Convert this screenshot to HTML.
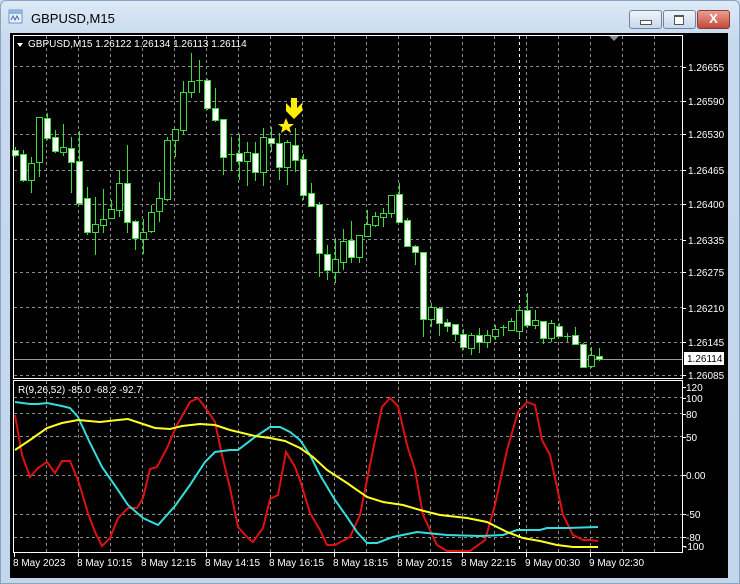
<!DOCTYPE html>
<html><head><meta charset="utf-8"><style>
html,body{margin:0;padding:0;width:740px;height:584px;overflow:hidden;background:#c9dcef;font-family:"Liberation Sans",sans-serif}
#win{position:absolute;left:0;top:0;width:738px;height:582px;border:1px solid #8aa3bf;border-radius:6px 6px 0 0;background:linear-gradient(#dde9f6,#c6d9ee 40px,#c2d6ec)}
.title{position:absolute;left:31px;top:11px;font-size:13px;color:#000}
.btn{position:absolute;top:10px;height:17px;border:1px solid #6d87a6;border-radius:3px;background:linear-gradient(#eef4fb,#c9d8ea)}
#chart{position:absolute;left:10px;top:33px}
</style></head><body>
<div id="win"></div>
<svg style="position:absolute;left:8px;top:9px" width="16" height="16" viewBox="0 0 16 16"><rect x="1" y="1" width="13" height="13" fill="#e8f0fa" stroke="#6f93c0"/><rect x="1" y="1" width="13" height="4" fill="#8db3e0"/><path d="M3 11 L5 7 L7 11 L9 7 L11 11" stroke="#3a6fb0" fill="none"/></svg>
<div class="title">GBPUSD,M15</div>
<div class="btn" style="left:629px;width:31px"><div style="position:absolute;left:10px;top:9px;width:10px;height:3px;border:1px solid #555;background:#fff"></div></div>
<div class="btn" style="left:663px;width:31px"><div style="position:absolute;left:10px;top:4px;width:8px;height:7px;border:1px solid #555;border-top-width:2px;background:#fff"></div></div>
<div class="btn" style="left:697px;width:31px;border-color:#8a3b32;background:linear-gradient(#e8a093,#c5483a)"><div style="position:absolute;left:0;right:0;top:0;text-align:center;color:#fff;font-weight:bold;font-size:13px;line-height:16px">X</div></div>
<svg id="chart" width="718" height="545" viewBox="10 33 718 545" font-family="Liberation Sans, sans-serif" font-size="10">
<rect x="10" y="33" width="718" height="545" fill="#000"/>
<g id="grid" stroke="#8c8c8c" stroke-dasharray="3,3" stroke-width="1"></g>
<line x1="519.5" y1="36" x2="519.5" y2="552" stroke="#fff" stroke-dasharray="3,3"/>
<line x1="14" y1="359.5" x2="682" y2="359.5" stroke="#9a9a9a"/>
<g id="candles"></g>
<rect x="13.5" y="35.5" width="669" height="343" fill="none" stroke="#fff"/>
<rect x="13.5" y="380.5" width="669" height="172" fill="none" stroke="#fff"/>
<path d="M609 36 L619 36 L614 41 Z" fill="#8c8c8c"/>
<path d="M17 43 L23 43 L20 47 Z" fill="#fff"/>
<text x="28" y="47" fill="#fff">GBPUSD,M15  1.26122 1.26134 1.26113 1.26114</text>
<text x="18" y="393" fill="#fff">R(9,26,52) -85.0 -68.2 -92.7</text>
<polygon points="286,118 288.5,124 294,124 289.5,127.5 291,133 286,129.5 281,133 282.5,127.5 278,124 283.5,124" fill="#ffee00"/>
<path d="M291 98 L297 98 L297 108 L302 103 L302 111 L294 119 L286 111 L286 103 L291 108 Z" fill="#ffee00"/>
<g id="ind" fill="none" stroke-width="2"></g>
<g id="labels" fill="#fff"></g>
<rect x="684" y="352" width="40" height="13" fill="#fff"/>
<text x="687" y="362" fill="#000">1.26114</text>
</svg>
<script>
var NS="http://www.w3.org/2000/svg";
function el(p,t,a,txt){var e=document.createElementNS(NS,t);for(var k in a)e.setAttribute(k,a[k]);if(txt)e.textContent=txt;document.getElementById(p).appendChild(e);return e;}
// grid
for(var x=46;x<=654;x+=32){if(x==518)continue;el("grid","line",{x1:x+.5,y1:36,x2:x+.5,y2:378});el("grid","line",{x1:x+.5,y1:381,x2:x+.5,y2:552});}
[66,101,134,170,204,239,272,307,342,375].forEach(function(y){el("grid","line",{x1:14,y1:y+.5,x2:682,y2:y+.5});});
[397,413,436,475,514,537].forEach(function(y){el("grid","line",{x1:14,y1:y+.5,x2:682,y2:y+.5});});
// candles [bodyTop,bodyBot,wickTop,wickBot,filled]
var C=[[150,155,147,157,1],[154,180,150,182,1],[163,180,157,193,0],[117,162,117,177,0],[118,138,113,140,1],[137,151,130,153,1],[147,152,124,156,0],[148,162,137,193,1],[161,203,131,205,1],[198,232,187,235,1],[224,232,197,255,0],[219,225,189,233,0],[209,218,200,217,0],[183,210,170,217,0],[183,222,145,233,1],[221,238,220,250,1],[232,239,219,254,0],[212,231,205,233,0],[198,211,182,222,0],[140,199,137,201,0],[129,140,129,157,0],[92,130,81,134,0],[81,92,53,98,0],[80,81,60,93,2],[80,108,79,110,1],[108,120,88,122,1],[119,157,119,175,1],[154,155,137,171,2],[153,161,134,180,1],[152,161,142,186,0],[153,172,142,181,1],[137,172,128,186,0],[138,143,127,152,1],[143,167,133,180,1],[142,167,140,185,0],[145,160,128,172,1],[159,195,154,200,1],[193,206,183,207,1],[204,253,202,277,1],[254,270,245,280,1],[259,272,238,283,0],[241,262,229,270,0],[240,257,221,263,1],[235,257,235,263,0],[224,236,210,237,0],[216,225,212,227,0],[213,217,208,227,0],[195,213,195,218,0],[194,222,183,223,1],[220,246,218,247,1],[246,252,245,265,1],[252,319,252,337,1],[307,319,303,327,0],[308,323,307,336,1],[322,326,319,332,1],[324,334,324,341,1],[334,347,329,350,1],[335,348,333,355,0],[335,342,328,353,1],[335,342,330,348,0],[329,336,325,340,0],[327,328,325,336,2],[321,330,318,331,0],[310,331,305,338,0],[310,325,293,328,1],[320,325,310,329,0],[321,338,321,344,1],[323,338,320,342,0],[326,336,323,337,1],[336,337,333,342,2],[335,344,327,345,1],[344,367,343,367,1],[355,366,347,368,0],[356,359,348,361,1]];
var G="#3ddc3d";
C.forEach(function(c,i){var x=15+8*i;
el("candles","line",{x1:x+.5,y1:c[2],x2:x+.5,y2:c[3],stroke:G});
if(c[4]==2){el("candles","line",{x1:x-3,y1:c[0]+.5,x2:x+4,y2:c[0]+.5,stroke:G});}
else el("candles","rect",{x:x-2.5,y:c[0]+.5,width:6,height:Math.max(1,c[1]-c[0]),fill:c[4]?"#fff":"#000",stroke:G});});
// indicator lines
function pl(pts,col){el("ind","polyline",{points:pts,stroke:col});}
pl("15,415 22,455 30,477 38,468 47,462 55,473 62,461 70,461 78,480 88,513 95,532 102,546 110,538 118,518 128,508 137,508 143,498 150,469 157,467 167,448 177,425 190,402 198,398 207,410 215,422 222,455 230,488 238,527 247,537 253,542 263,528 270,499 278,495 286,452 295,467 300,480 310,513 320,530 327,545 335,545 350,537 360,515 373,450 382,407 390,398 398,406 407,445 415,470 423,515 437,545 447,551 470,551 485,540 495,505 507,450 518,412 527,402 535,405 542,440 550,455 563,515 573,535 583,540 590,540 598,541","#dd1111");
pl("15,402 30,404 38,404 47,403 62,406 70,408 78,417 90,443 102,467 118,490 128,505 143,518 158,525 175,506 190,485 205,462 215,452 230,450 238,450 255,437 270,427 280,427 290,432 300,440 310,455 320,475 335,500 347,517 357,532 367,543 377,543 393,537 417,532 447,535 480,536 503,535 517,530 540,530 547,528 567,528 598,527","#33dddd");
pl("15,450 30,440 47,428 62,423 78,420 100,422 118,420 128,419 143,424 155,428 170,429 182,426 200,424 215,425 230,430 255,436 270,438 285,441 300,448 313,457 327,470 347,483 367,497 383,502 403,505 420,510 440,515 467,518 487,522 507,532 523,538 540,541 557,545 573,547 598,547","#ffff22");
// price labels
[[67,"1.26655"],[101,"1.26590"],[134,"1.26530"],[170,"1.26465"],[204,"1.26400"],[240,"1.26335"],[272,"1.26275"],[308,"1.26210"],[342,"1.26145"],[375,"1.26085"]].forEach(function(p){
el("labels","rect",{x:683,y:p[0],width:3,height:1});el("labels","text",{x:688,y:p[0]+4},p[1]);});
[[387,"120"],[398,"100"],[414,"80"],[437,"50"],[475,"0.00"],[514,"-50"],[537,"-80"],[546,"-100"]].forEach(function(p){
el("labels","rect",{x:683,y:p[0],width:3,height:1});el("labels","text",{x:p[1].length>3&&p[1][0]=="-"?684:686,y:p[0]+4},p[1]);});
[[14,"8 May 2023"],[78,"8 May 10:15"],[142,"8 May 12:15"],[206,"8 May 14:15"],[270,"8 May 16:15"],[334,"8 May 18:15"],[398,"8 May 20:15"],[462,"8 May 22:15"],[526,"9 May 00:30"],[590,"9 May 02:30"]].forEach(function(p){
el("labels","rect",{x:p[0],y:553,width:1,height:4});el("labels","text",{x:p[0]-1,y:566},p[1]);});
</script>
</body></html>
